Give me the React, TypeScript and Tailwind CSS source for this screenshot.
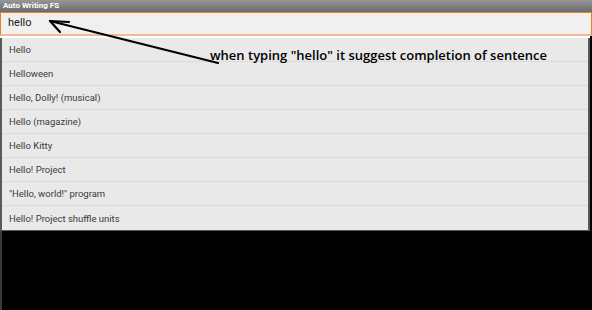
import React from 'react';

const suggestions = [
  'Hello',
  'Helloween',
  'Hello, Dolly! (musical)',
  'Hello (magazine)',
  'Hello Kitty',
  'Hello! Project',
  '"Hello, world!" program',
  'Hello! Project shuffle units',
];

export default function App() {
  return (
    <div className="relative w-[592px] h-[310px] overflow-hidden bg-black font-['Roboto',sans-serif]">
      {/* title bar */}
      <div className="h-[12px] flex items-center px-[3px] bg-gradient-to-b from-[#979797] to-[#6c6c6c]">
        <span className="text-[8px] leading-none font-bold text-white">Auto Writing FS</span>
      </div>

      {/* search field */}
      <div className="h-[24px] w-[592px] flex items-center pl-[7px] bg-[#f0f0f0] border-t border-x border-[#e8821e] border-b-2 border-b-[#f6b896]">
        <span className="text-[11px] text-[#222]">hello</span>
      </div>
      <div className="h-[2px] w-[590px] bg-white" />

      {/* dropdown */}
      <div className="w-[590px] bg-[#e9e9e9] border-x-2 border-b border-[#5a5a5a]">
        {suggestions.map((s, i) => (
          <div
            key={s}
            className={`h-[24px] flex items-center pl-[7px] pt-[2px] text-[9.5px] text-[#3a3a3a] ${
              i < suggestions.length - 1 ? 'border-b border-[#dadada]' : ''
            }`}
          >
            {s}
          </div>
        ))}
      </div>
      <div className="w-[2px] h-[80px] bg-[#3a3a3a]" />

      {/* annotation */}
      <svg className="absolute left-0 top-0" width="592" height="310" viewBox="0 0 592 310">
        <g stroke="#000" strokeWidth="2.2" strokeLinecap="round" fill="none">
          <line x1="218" y1="63" x2="50" y2="21" />
          <line x1="50" y1="21" x2="69" y2="22" />
          <line x1="50" y1="21" x2="60" y2="32" />
        </g>
      </svg>
      <div className="absolute left-[210px] top-[46px] text-[13px] leading-[18px] font-semibold text-black font-['Open_Sans',sans-serif] whitespace-nowrap">
        when typing "hello" it suggest completion of sentence
      </div>
    </div>
  );
}
